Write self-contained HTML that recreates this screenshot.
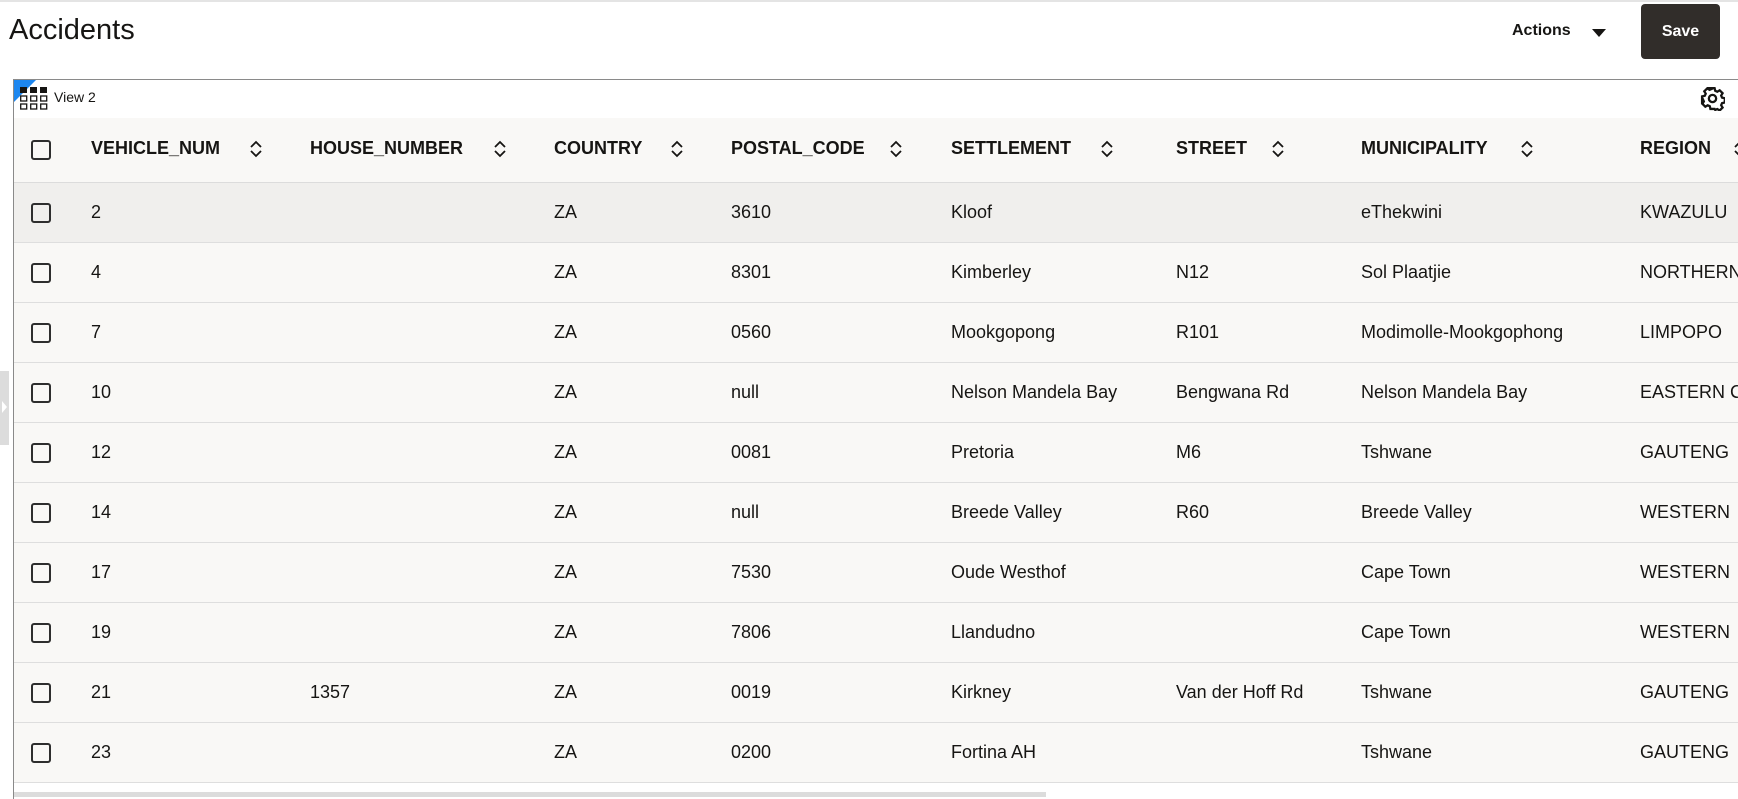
<!DOCTYPE html>
<html><head><style>
*{margin:0;padding:0;box-sizing:border-box}
body{width:1738px;height:797px;overflow:hidden;background:#fff;font-family:"Liberation Sans",sans-serif;color:#161513;position:relative}
.topline{position:absolute;left:0;top:0;width:1738px;height:2px;background:#e4e4e4}
h1{position:absolute;left:9px;top:14px;font-size:29px;font-weight:normal;}
.actions{position:absolute;left:1512px;top:22px;font-size:16px;font-weight:bold}
.tri{position:absolute;left:1592px;top:29px;width:0;height:0;border-left:7px solid transparent;border-right:7px solid transparent;border-top:8px solid #161513}
.save{position:absolute;left:1641px;top:4px;width:79px;height:55px;background:#312d2a;border-radius:4px;color:#fff;font-weight:bold;font-size:16px;text-align:center;line-height:55px}
.frame{position:absolute;left:13px;top:79px;width:1725px;height:720px;border-left:1px solid #8a8a8a;border-top:1px solid #8a8a8a}
.corner{position:absolute;left:14px;top:80px;width:0;height:0;border-top:22px solid #1d87f0;border-right:22px solid transparent}
.view{position:absolute;left:54px;top:89px;font-size:14px}
.hdr{position:absolute;left:14px;top:118px;width:1724px;height:65px;background:#f9f8f6;border-bottom:1px solid #dcdcdc}
.row{position:absolute;left:14px;width:1724px;height:60px;background:#f9f8f6;border-bottom:1px solid #dedede}
.cb{position:absolute;left:17px;width:20px;height:20px;border:2px solid #2e2e2e;border-radius:3px;background:transparent}
.c{position:absolute;font-size:18px;white-space:nowrap}
.h{position:absolute;font-size:18px;font-weight:bold;white-space:nowrap;top:20px}
.s{position:absolute;top:22px}
.tab{position:absolute;left:0;top:371px;width:9px;height:74px;background:#dcdcdc}
.sb{position:absolute;left:14px;top:792px;width:1032px;height:5px;background:#dcdcdc}
</style></head><body>
<div class="topline"></div>
<h1>Accidents</h1>
<div class="actions">Actions</div><div class="tri"></div>
<div class="save">Save</div>
<div class="frame"></div>
<div class="corner"></div>
<svg style="position:absolute;left:20px;top:87px" width="28" height="24" viewBox="0 0 28 24">
<rect x="0" y="0" width="7" height="6" fill="#161513"/><rect x="10" y="0" width="7" height="6" fill="#161513"/><rect x="20" y="0" width="7" height="6" fill="#161513"/>
<g fill="none" stroke="#161513" stroke-width="1.3"><rect x="0.7" y="9" width="6" height="5"/><rect x="10.7" y="9" width="6" height="5"/><rect x="20.7" y="9" width="6" height="5"/>
<rect x="0.7" y="17" width="6" height="5"/><rect x="10.7" y="17" width="6" height="5"/><rect x="20.7" y="17" width="6" height="5"/></g></svg>
<div class="view">View 2</div>
<svg style="position:absolute;left:1700px;top:86px" width="25" height="25" viewBox="0 0 24 24"><path fill="none" stroke="#161513" stroke-width="2.2" d="M10 2h4l.6 2.6 2 .9 2.3-1.4 2.8 2.8-1.4 2.3.9 2 2.6.6v4l-2.6.6-.9 2 1.4 2.3-2.8 2.8-2.3-1.4-2 .9L14 22h-4l-.6-2.6-2-.9-2.3 1.4-2.8-2.8 1.4-2.3-.9-2L2 14v-4l2.6-.6.9-2-1.4-2.3 2.8-2.8 2.3 1.4 2-.9z"/><circle cx="12" cy="12" r="3.5" fill="none" stroke="#161513" stroke-width="2.2"/></svg>
<div class="tab"><svg width="9" height="74"><path d="M2 30l5 6-5 6z" fill="#fff"/></svg></div>
<div class="hdr">
<div class="cb" style="top:22px"></div>
<div class="h" style="left:77px">VEHICLE_NUM</div>
<div class="h" style="left:296px">HOUSE_NUMBER</div>
<div class="h" style="left:540px">COUNTRY</div>
<div class="h" style="left:717px">POSTAL_CODE</div>
<div class="h" style="left:937px">SETTLEMENT</div>
<div class="h" style="left:1162px">STREET</div>
<div class="h" style="left:1347px">MUNICIPALITY</div>
<div class="h" style="left:1626px">REGION</div>
<svg class="s" style="left:236px" width="12" height="18"><path d="M1 7l5-5 5 5M1 11l5 5 5-5" fill="none" stroke="#161513" stroke-width="1.8"/></svg>
<svg class="s" style="left:480px" width="12" height="18"><path d="M1 7l5-5 5 5M1 11l5 5 5-5" fill="none" stroke="#161513" stroke-width="1.8"/></svg>
<svg class="s" style="left:657px" width="12" height="18"><path d="M1 7l5-5 5 5M1 11l5 5 5-5" fill="none" stroke="#161513" stroke-width="1.8"/></svg>
<svg class="s" style="left:876px" width="12" height="18"><path d="M1 7l5-5 5 5M1 11l5 5 5-5" fill="none" stroke="#161513" stroke-width="1.8"/></svg>
<svg class="s" style="left:1087px" width="12" height="18"><path d="M1 7l5-5 5 5M1 11l5 5 5-5" fill="none" stroke="#161513" stroke-width="1.8"/></svg>
<svg class="s" style="left:1258px" width="12" height="18"><path d="M1 7l5-5 5 5M1 11l5 5 5-5" fill="none" stroke="#161513" stroke-width="1.8"/></svg>
<svg class="s" style="left:1507px" width="12" height="18"><path d="M1 7l5-5 5 5M1 11l5 5 5-5" fill="none" stroke="#161513" stroke-width="1.8"/></svg>
<svg class="s" style="left:1720px" width="12" height="18"><path d="M1 7l5-5 5 5M1 11l5 5 5-5" fill="none" stroke="#161513" stroke-width="1.8"/></svg>
</div>
<div id="rows"></div>
<div class="sb"></div>
<script>
var d=[["2","","ZA","3610","Kloof","","eThekwini","KWAZULU"],["4","","ZA","8301","Kimberley","N12","Sol Plaatjie","NORTHERN"],["7","","ZA","0560","Mookgopong","R101","Modimolle-Mookgophong","LIMPOPO"],["10","","ZA","null","Nelson Mandela Bay","Bengwana Rd","Nelson Mandela Bay","EASTERN C"],["12","","ZA","0081","Pretoria","M6","Tshwane","GAUTENG"],["14","","ZA","null","Breede Valley","R60","Breede Valley","WESTERN"],["17","","ZA","7530","Oude Westhof","","Cape Town","WESTERN"],["19","","ZA","7806","Llandudno","","Cape Town","WESTERN"],["21","1357","ZA","0019","Kirkney","Van der Hoff Rd","Tshwane","GAUTENG"],["23","","ZA","0200","Fortina AH","","Tshwane","GAUTENG"]];
var xs=[77,296,540,717,937,1162,1347,1626],h="";
d.forEach(function(r,i){h+='<div class="row" style="top:'+(183+i*60)+'px;'+(i==0?'background:#f0efed':'')+'"><div class="cb" style="top:20px"></div>';
r.forEach(function(v,j){h+='<div class="c" style="left:'+xs[j]+'px;top:19px">'+v+'</div>'});h+='</div>'});
document.getElementById('rows').innerHTML=h;
</script>
</body></html>
